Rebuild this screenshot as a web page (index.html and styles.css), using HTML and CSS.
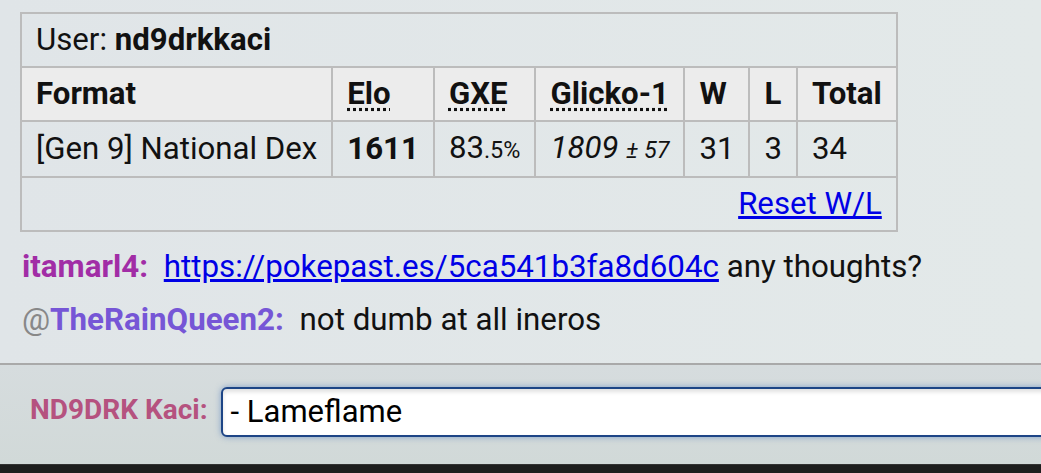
FILE: index.html
```html
<!DOCTYPE html>
<html lang="en">
<head>
    <meta charset="UTF-8">
    <meta name="viewport" content="width=device-width, initial-scale=1.0">
    <title>Chat</title>
    <link rel="stylesheet" href="styles.css">
</head>
<body>

    <div class="chat-log">
        <table class="rank-table">
            <tr>
                <td colspan="7" class="user-cell">User: <strong>nd9drkkaci</strong></td>
            </tr>
            <tr class="head-row">
                <th>Format</th>
                <th><abbr>Elo</abbr></th>
                <th><abbr>GXE</abbr></th>
                <th><abbr>Glicko-1</abbr></th>
                <th>W</th>
                <th>L</th>
                <th>Total</th>
            </tr>
            <tr>
                <td>[Gen 9] National Dex</td>
                <td><strong>1611</strong></td>
                <td>83<small>.5%</small></td>
                <td><em>1809 <small>± 57</small></em></td>
                <td>31</td>
                <td>3</td>
                <td>34</td>
            </tr>
            <tr>
                <td colspan="7" class="reset-cell"><a href="#">Reset W/L</a></td>
            </tr>
        </table>

        <div class="chat-line">
            <strong class="name name-itamar">itamarl4:</strong>
            <span class="msg"><a href="#">https://pokepast.es/5ca541b3fa8d604c</a> any thoughts?</span>
        </div>
        <div class="chat-line">
            <strong class="name name-rain"><span class="group">@</span>TheRainQueen2:</strong>
            <span class="msg">not dumb at all ineros</span>
        </div>
    </div>

    <div class="compose">
        <label class="compose-name">ND9DRK Kaci:</label>
        <div class="compose-box">- Lameflame</div>
    </div>

    <div class="bottom-bar"></div>

</body>
</html>
```

FILE: styles.css
```css
:root {
    --bg-color: #e1e7e9;
    --border-color: #bcbcbc;
    --text-color: #111;
    --link-color: #0000e6;
    --input-border: #1d4586;
}

body {
    font-family: Roboto, 'Noto Sans', sans-serif;
    background-color: var(--bg-color);
    color: var(--text-color);
    margin: 0;
    height: 473px;
    display: flex;
    flex-direction: column;
    overflow: hidden;
}

.chat-log {
    height: 363px;
    padding: 12px 0 0 20px;
    box-sizing: border-box;
    background: linear-gradient(90deg, #e0e5e8, #e3e9e9);
}

.rank-table {
    border-collapse: collapse;
    border: 2px solid var(--border-color);
    font-size: 31.2px;
}

.rank-table td,
.rank-table th {
    border: 2px solid var(--border-color);
    padding: 10px 14px;
    line-height: 32px;
    text-align: left;
    white-space: nowrap;
}

.rank-table th {
    font-weight: bold;
}

.head-row {
    background-color: #ececec;
}

.rank-table abbr {
    text-decoration: underline dotted;
    text-underline-offset: 4px;
}

.rank-table small {
    font-size: 0.75em;
}

.reset-cell {
    text-align: right !important;
}

.reset-cell a,
.msg a {
    color: var(--link-color);
}

.chat-line {
    font-size: 31.3px;
    line-height: 53px;
    padding-left: 2px;
    white-space: nowrap;
}

.chat-line:first-of-type {
    margin-top: 8px;
}

.name {
    font-weight: bold;
    margin-right: 8px;
}

.name-itamar {
    color: #a12da6;
}

.name-rain {
    color: #7656d6;
}

.group {
    color: #888;
    font-weight: normal;
}

.compose {
    flex: 1;
    border-top: 2px solid #a9a9a9;
    background: linear-gradient(180deg, #d6dcde, #d1d9d8);
    display: flex;
    align-items: flex-start;
    padding: 22px 0 0 30px;
}

.compose-name {
    font-size: 28px;
    font-weight: bold;
    color: #b5527f;
    line-height: 46px;
    margin-right: 13px;
}

.compose-box {
    flex: 1;
    height: 46px;
    margin-right: -20px;
    background: #fff;
    border: 2px solid var(--input-border);
    border-radius: 6px;
    box-shadow: inset 0 3px 4px rgba(0, 0, 0, 0.12), 0 0 6px rgba(60, 110, 180, 0.55);
    font-size: 31px;
    line-height: 46px;
    padding-left: 8px;
    color: #000;
}

.bottom-bar {
    height: 8px;
    background: #1e1e1e;
    border-top: 1px solid #333;
}
```
